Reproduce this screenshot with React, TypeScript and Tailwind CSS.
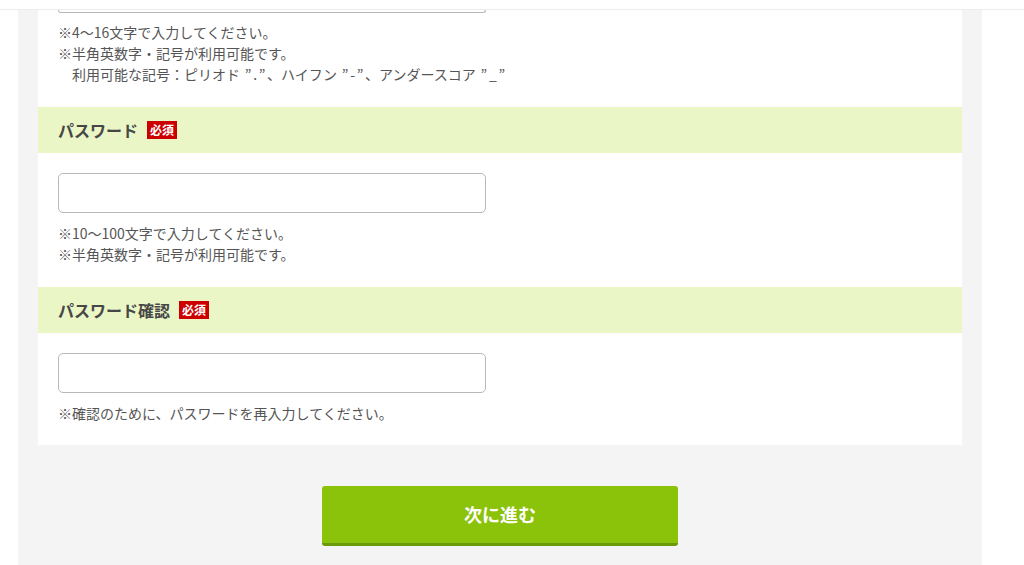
import React from 'react'

const font = { fontFamily: '"Noto Sans CJK JP", "Noto Sans", sans-serif' }

const Required = () => (
  <span className="ml-[9px] inline-flex h-[18px] items-center bg-[#cc0000] px-[3px] text-[12px] font-bold leading-none text-white">
    必須
  </span>
)

const Label = ({ children }: { children: React.ReactNode }) => (
  <div className="flex h-[46px] items-center bg-[#eaf6c6] px-5">
    <span className="text-[16px] font-bold text-[#474747]">{children}</span>
    <Required />
  </div>
)

const Field = () => (
  <input
    type="password"
    className="block h-10 w-[428px] rounded-[5px] border border-[#b8b8b8] bg-white px-3 text-sm outline-none"
  />
)

const Note = ({ children, className = '' }: { children: React.ReactNode; className?: string }) => (
  <p className={`text-[14px] leading-[21px] text-[#555] ${className}`}>{children}</p>
)

// quoted symbol, the quotes are set wide like a full-width font does
const Sym = ({ c }: { c: string }) => (
  <>
    <span className="inline-block w-[10px] text-center">”</span>
    {c}
    <span className="inline-block w-[10px] text-center">”</span>
  </>
)

const App = () => {
  return (
    <div className="min-h-[565px] bg-white" style={font}>
      <div className="h-[10px] border-b border-[#ececec] bg-white" />
      <div className="ml-[18px] mr-[42px] min-h-[555px] bg-[#f4f4f4] px-5">
        <div className="bg-white">
          <div className="px-5 pb-[22px]">
            <div className="h-[3px] w-[428px] rounded-b-[5px] border-x border-b border-[#b8b8b8]" />
            <div className="mt-[9px]">
              <Note>※4〜16文字で入力してください。</Note>
              <Note>※半角英数字・記号が利用可能です。</Note>
              <Note className="pl-[14px]">
                利用可能な記号：ピリオド <Sym c="." />、ハイフン <Sym c="-" />、アンダースコア <Sym c="_" />
              </Note>
            </div>
          </div>

          <Label>パスワード</Label>
          <div className="px-5 pt-5 pb-[22px]">
            <Field />
            <div className="mt-[10px]">
              <Note>※10〜100文字で入力してください。</Note>
              <Note>※半角英数字・記号が利用可能です。</Note>
            </div>
          </div>

          <Label>パスワード確認</Label>
          <div className="px-5 pt-5 pb-[21px]">
            <Field />
            <div className="mt-[10px]">
              <Note>※確認のために、パスワードを再入力してください。</Note>
            </div>
          </div>
        </div>

        <div className="flex justify-center pt-[41px]">
          <button
            type="button"
            className="h-[60px] w-[356px] rounded-[3px] border-b-[3px] border-[#6c9a06] bg-[#8bc20a] text-[18px] font-bold text-white"
          >
            次に進む
          </button>
        </div>
      </div>
    </div>
  )
}

export default App
